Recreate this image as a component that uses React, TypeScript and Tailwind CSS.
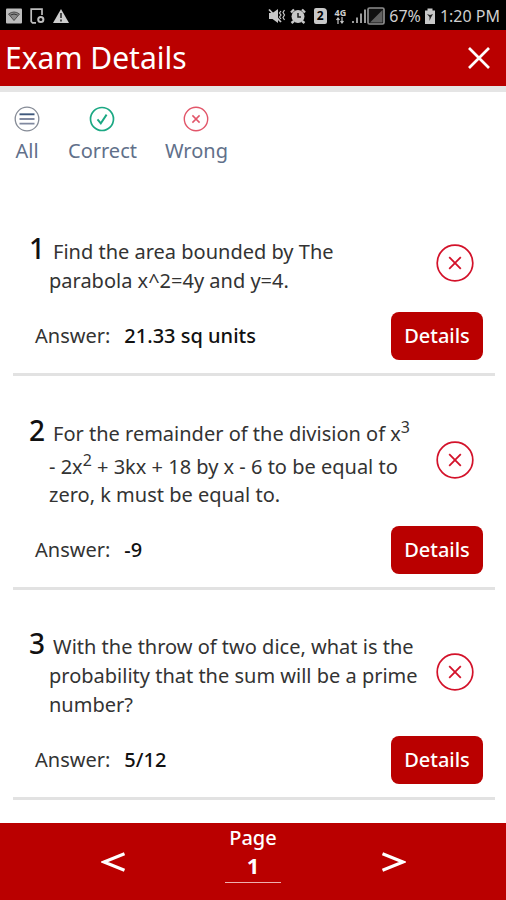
import { useState, type ReactNode } from "react";

type Question = {
  id: number;
  text: ReactNode;
  answer: string;
};

function Power({ children }: { children: ReactNode }) {
  return <sup className="static align-super text-base leading-6">{children}</sup>;
}

const QUESTIONS: Question[] = [
  {
    id: 1,
    text: "Find the area bounded by The parabola x^2=4y and y=4.",
    answer: "21.33 sq units",
  },
  {
    id: 2,
    text: (
      <>
        For the remainder of the division of x<Power>3</Power> - 2x<Power>2</Power> + 3kx + 18 by x
        - 6 to be equal to zero, k must be equal to.
      </>
    ),
    answer: "-9",
  },
  {
    id: 3,
    text: "With the throw of two dice, what is the probability that the sum will be a prime number?",
    answer: "5/12",
  },
];

function ListCircleIcon() {
  return (
    <svg viewBox="0 0 26 26" className="size-[26px]" fill="none" aria-hidden="true">
      <circle cx="13" cy="13" r="11.8" stroke="#858b96" strokeWidth="1.3" />
      <path d="M5.5 8.3h15" stroke="#3f587c" strokeWidth="1.9" />
      <path d="M5.5 13h15M5.5 17.7h15" stroke="#8089a0" strokeWidth="1.8" />
    </svg>
  );
}

function CheckCircleIcon() {
  return (
    <svg viewBox="0 0 26 26" className="size-[26px]" fill="none" stroke="#1ba883" aria-hidden="true">
      <circle cx="13" cy="13" r="11.5" strokeWidth="1.7" />
      <path d="M8.5 13.3l3.3 4L17.6 8.6" strokeWidth="1.9" />
    </svg>
  );
}

function CrossCircleIcon() {
  return (
    <svg viewBox="0 0 26 26" className="size-[26px]" fill="none" stroke="#e2566a" aria-hidden="true">
      <circle cx="13" cy="13" r="11.7" strokeWidth="1.4" />
      <path d="M9.4 9.4l7.2 7.2M16.6 9.4l-7.2 7.2" strokeWidth="1.5" />
    </svg>
  );
}

function WrongMark() {
  return (
    <svg
      viewBox="0 0 38 38"
      className="mb-1 size-[38px] shrink-0"
      fill="none"
      stroke="#d3122a"
      role="img"
      aria-label="Wrong"
    >
      <circle cx="19" cy="19" r="17.8" strokeWidth="1.7" />
      <path d="M13.2 13.2l11.6 11.6M24.8 13.2L13.2 24.8" strokeWidth="1.8" />
    </svg>
  );
}

function StatusBar() {
  return (
    <div className="flex h-[30px] items-center justify-between bg-black px-1.5 pt-0.5 text-[#cfcfcf]">
      <div className="flex items-center gap-2">
        <svg viewBox="0 0 16 16" className="size-4" aria-hidden="true">
          <rect width="16" height="15" rx="1" y="0.5" fill="#bdbdbd" />
          <path d="M2.5 6q5.5-4 11 0L8 12.5z" fill="#8a8a8a" stroke="#444" strokeWidth="0.9" />
          <path d="M4.5 7q3.5-2 7 0" fill="none" stroke="#333" />
        </svg>
        <svg viewBox="0 0 15 16" className="h-4 w-[15px]" fill="none" stroke="#bdbdbd" aria-hidden="true">
          <path d="M6 14.8H2.5L1.2 13.5V1.2H12V7" strokeWidth="1.7" />
          <circle cx="10.8" cy="11.5" r="2.6" strokeWidth="2" />
        </svg>
        <svg viewBox="0 0 16 16" className="size-4" aria-hidden="true">
          <path d="M8 1l8 14H0z" fill="#cdcdcd" />
          <path d="M8 5v5M8 11.5v2" stroke="#333" strokeWidth="1.7" />
        </svg>
      </div>
      <div className="flex items-center">
        <svg viewBox="0 0 18 16" className="mr-1 h-4 w-[18px]" fill="none" stroke="#c8c8c8" aria-hidden="true">
          <path d="M1 5h3.5L10 1v14L4.5 11H1z" fill="#c8c8c8" stroke="none" />
          <path d="M1 1.5l12 12.5" strokeWidth="1.8" />
          <path d="M13 3l-1.5 2L13 7l-1.5 2L13 11M16.5 2L15 4.5 16.5 7 15 9.5l1.5 2.5" strokeWidth="1.2" />
        </svg>
        <svg viewBox="0 0 16 16" className="size-4" aria-hidden="true">
          <circle cx="8" cy="8.5" r="6.5" fill="#c8c8c8" />
          <path d="M1 4.5L4 1.5M12 1.5l3 3M1.5 15l2.5-2M14.5 15L12 13" stroke="#c8c8c8" strokeWidth="2.4" />
          <path d="M8 5v4h3" fill="none" stroke="#222" strokeWidth="1.5" />
        </svg>
        <span className="ml-2 flex h-4 w-[13px] items-center justify-center rounded-[2px] rounded-tr-[4px] bg-[#c8c8c8] text-xs font-bold text-black">
          2
        </span>
        <span className="ml-2 mr-1 flex flex-col items-center">
          <span className="text-[9px] font-bold leading-[8px]">4G</span>
          <svg viewBox="0 0 10 7" className="h-[7px] w-2.5" fill="none" stroke="#c8c8c8" aria-hidden="true">
            <path d="M3 7V1M1.5 3L3 1l1.5 2M7 0v6M5.5 4L7 6l1.5-2" strokeWidth="1.2" />
          </svg>
        </span>
        <svg viewBox="0 0 17 16" className="h-4 w-[17px]" stroke="#b5b5b5" aria-hidden="true">
          <path d="M3 15v-2M7 15V9.5M11 15V5.5M15 15V1.5" strokeWidth="1.7" fill="none" />
        </svg>
        <svg viewBox="0 0 18 18" className="size-[18px]" aria-hidden="true">
          <rect x="1" y="1" width="16" height="16" rx="1.5" fill="#111" stroke="#8d8d8d" strokeWidth="1.7" />
          <path d="M15.5 3v12.5H3z" fill="#606060" />
        </svg>
        <span className="ml-1 text-base leading-5">67%</span>
        <svg viewBox="0 0 12 16" className="ml-[3px] h-4 w-3" aria-hidden="true">
          <path d="M1 2.5h2.5V0.5h5v2H11V16H1z" fill="#c8c8c8" />
          <path d="M3 6l3 1 3-1-2 3.5L5.5 13V9z" fill="#222" />
        </svg>
        <span className="ml-1 text-base leading-5">1:20 PM</span>
      </div>
    </div>
  );
}

function QuestionItem({ question }: { question: Question }) {
  return (
    <li className="ml-[13px] mr-[11px] border-b-[3px] border-[#e2e2e2] pb-[13px] pt-[39px]">
      <div className="flex items-center justify-between pl-9 pr-[21px]">
        <p className="max-w-[371px] -indent-5 text-xl leading-[29px] text-[#333]">
          <span className="mr-2 text-[28px] font-medium text-[#111]">{question.id}</span>
          {question.text}
        </p>
        <WrongMark />
      </div>
      <div className="mt-[17px] flex items-center justify-between pl-[22px] pr-3">
        <p className="text-xl text-[#333]">
          Answer:
          <span className="ml-3.5 font-medium text-[#111]">{question.answer}</span>
        </p>
        <button
          type="button"
          className="h-12 w-[92px] rounded-lg bg-[#ba0000] text-xl font-medium text-white"
        >
          Details
        </button>
      </div>
    </li>
  );
}

export default function App() {
  const [page, setPage] = useState("1");

  const step = (by: number) => setPage(String(Math.max(1, (Number(page) || 1) + by)));

  return (
    <div className="flex min-h-screen flex-col bg-white font-['Noto_Sans',sans-serif]">
      <StatusBar />
      <header className="flex h-[62px] items-center justify-between border-b-[6px] border-[#e5e5e5] bg-[#ba0000] pl-[5px] pr-4 text-white">
        <h1 className="text-3xl leading-9">Exam Details</h1>
        <button type="button" aria-label="Close">
          <svg viewBox="0 0 22 22" className="size-[22px]" fill="none" stroke="currentColor" aria-hidden="true">
            <path d="M1 1l20 20M21 1L1 21" strokeWidth="2.7" />
          </svg>
        </button>
      </header>

      <nav className="flex gap-7 px-3.5 pt-3.5 text-xl leading-7 text-[#61708a]">
        <button type="button" className="flex flex-col items-center gap-[5px]">
          <ListCircleIcon />
          All
        </button>
        <button type="button" className="flex flex-col items-center gap-[5px]">
          <CheckCircleIcon />
          Correct
        </button>
        <button type="button" className="flex flex-col items-center gap-[5px]">
          <CrossCircleIcon />
          Wrong
        </button>
      </nav>

      <ul className="mt-[30px] flex-1">
        {QUESTIONS.map((q) => (
          <QuestionItem key={q.id} question={q} />
        ))}
      </ul>

      <footer className="grid h-[77px] grid-cols-[1fr_56px_1fr] items-center bg-[#ba0000] text-white">
        <button type="button" aria-label="Previous page" className="justify-self-center" onClick={() => step(-1)}>
          <svg viewBox="0 0 24 20" className="h-5 w-6" fill="none" stroke="currentColor" aria-hidden="true">
            <path d="M23.5 1.8L3 10l20.5 8.2" strokeWidth="3.2" />
          </svg>
        </button>
        <label className="flex flex-col items-center self-start pt-0.5 text-xl leading-[26px] font-medium">
          Page
          <input
            className="h-8 w-full border-b border-[#eeb0b0] bg-transparent pb-1 text-center text-[22px] font-bold outline-none"
            inputMode="numeric"
            value={page}
            onChange={(e) => setPage(e.target.value)}
          />
        </label>
        <button type="button" aria-label="Next page" className="justify-self-center" onClick={() => step(1)}>
          <svg viewBox="0 0 24 20" className="h-5 w-6" fill="none" stroke="currentColor" aria-hidden="true">
            <path d="M0.5 1.8L21 10 0.5 18.2" strokeWidth="3.2" />
          </svg>
        </button>
      </footer>
    </div>
  );
}
